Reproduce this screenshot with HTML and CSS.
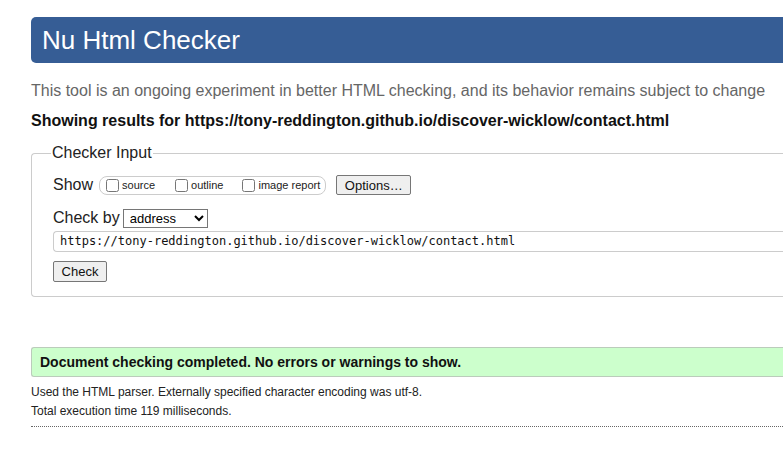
FILE: index.html
```html
<!DOCTYPE html>
<html lang="en">
<head>
<meta charset="utf-8">
<title>Showing results for contact.html - Nu Html Checker</title>
<link rel="stylesheet" href="styles.css">
</head>
<body>
<div class="page">
  <h1 class="title">Nu Html Checker</h1>
  <p class="about">This tool is an ongoing experiment in better HTML checking, and its behavior remains subject to change</p>
  <p class="results-for">Showing results for https://tony-reddington.github.io/discover-wicklow/contact.html</p>
  <fieldset class="checker">
    <legend class="legend">Checker Input</legend>
    <div class="show-row">
      <span class="row-label">Show</span>
      <span class="show-group">
        <label class="opt opt-source"><input type="checkbox" class="cb"><span>source</span></label>
        <label class="opt opt-outline"><input type="checkbox" class="cb"><span>outline</span></label>
        <label class="opt opt-last"><input type="checkbox" class="cb"><span>image report</span></label>
      </span>
      <button class="btn options-btn" type="button">Options…</button>
    </div>
    <div class="checkby-row">
      <span class="row-label">Check by</span>
      <select class="select"><option>address</option></select>
    </div>
    <div class="url-field">https://tony-reddington.github.io/discover-wicklow/contact.html</div>
    <button class="btn check-btn" type="button">Check</button>
  </fieldset>
  <p class="success">Document checking completed. No errors or warnings to show.</p>
  <p class="details details-first">Used the HTML parser. Externally specified character encoding was utf-8.</p>
  <p class="details details-second">Total execution time 119 milliseconds.</p>
  <div class="footer-rule"></div>
</div>
</body>
</html>
```

FILE: styles.css
```css
html, body {
  margin: 0;
  padding: 0;
  overflow: hidden;
  background: #fff;
}
body {
  font-family: "Liberation Sans", Arial, sans-serif;
  color: #000;
}
.page {
  width: calc(100% - 31px);
  margin-left: 31px;
  padding-top: 17px;
}
.title {
  margin: 0;
  height: 46px;
  box-sizing: border-box;
  background: #365d95;
  color: #fff;
  font-size: 26px;
  font-weight: normal;
  line-height: 46px;
  padding-left: 11px;
  border-radius: 5px 0 0 5px;
  white-space: nowrap;
}
.about {
  margin: 19px 0 0;
  font-size: 16px;
  line-height: 18px;
  color: #666;
  white-space: nowrap;
}
.results-for {
  margin: 12px 0 0;
  font-size: 16px;
  line-height: 18px;
  font-weight: bold;
  color: #111;
  white-space: nowrap;
}
.checker {
  margin: 14px 0 0;
  border: 1px solid #ccc;
  border-right: none;
  border-radius: 4px 0 0 4px;
  padding: 6px 0 14px 21px;
  min-width: 0;
}
.legend {
  font-size: 16px;
  padding: 0 1px;
  margin-left: -2px;
  color: #222;
}
.show-row {
  display: flex;
  align-items: center;
  height: 20px;
  margin-top: 7px;
}
.row-label {
  font-size: 16px;
  color: #222;
  margin-right: 6px;
}
.show-group {
  display: flex;
  align-items: center;
  height: 19px;
  box-sizing: border-box;
  border: 1px solid #ccc;
  border-radius: 8px;
  padding: 0 5px 0 6px;
  font-size: 11px;
  color: #222;
}
.opt {
  display: flex;
  align-items: center;
}
.opt-source {
  margin-right: 20px;
}
.opt-outline {
  margin-right: 19px;
}
.cb {
  margin: 0 3px 0 0;
  width: 13px;
  height: 13px;
}
.btn {
  font-family: "Liberation Sans", Arial, sans-serif;
  font-size: 13px;
  color: #111;
  background: #efefef;
  border: 1px solid #767676;
  border-radius: 2px;
  padding: 0 6px;
}
.options-btn {
  margin-left: 10px;
  height: 20px;
  width: 75px;
}
.checkby-row {
  display: flex;
  align-items: center;
  height: 20px;
  margin-top: 13px;
}
.checkby-row .row-label {
  margin-right: 3px;
}
.select {
  width: 85px;
  height: 19px;
  font-family: "Liberation Sans", Arial, sans-serif;
  font-size: 13px;
  border: 1px solid #767676;
  border-radius: 0;
  background: #fff;
  color: #000;
  padding: 0 0 0 2px;
}
.url-field {
  margin-top: 3px;
  height: 21px;
  box-sizing: border-box;
  border: 1px solid #ccc;
  border-right: none;
  border-radius: 4px 0 0 4px;
  font-family: "DejaVu Sans Mono", "Liberation Mono", monospace;
  font-size: 12px;
  line-height: 19px;
  padding-left: 6px;
  color: #111;
  white-space: nowrap;
}
.check-btn {
  display: block;
  margin-top: 9px;
  height: 21px;
  width: 54px;
  font-size: 13px;
}
.success {
  margin: 50px 0 0;
  height: 30px;
  box-sizing: border-box;
  background: #ccffcc;
  border: 1px solid #bbccbb;
  border-right: none;
  border-radius: 3px 0 0 3px;
  font-size: 14px;
  font-weight: bold;
  line-height: 28px;
  padding-left: 8px;
  color: #111;
  white-space: nowrap;
}
.details {
  font-size: 12px;
  line-height: 15px;
  color: #222;
}
.details-first {
  margin: 8px 0 0;
}
.details-second {
  margin: 4px 0 0;
}
.footer-rule {
  margin-top: 7px;
  border-top: 1px dotted #666;
}
```
